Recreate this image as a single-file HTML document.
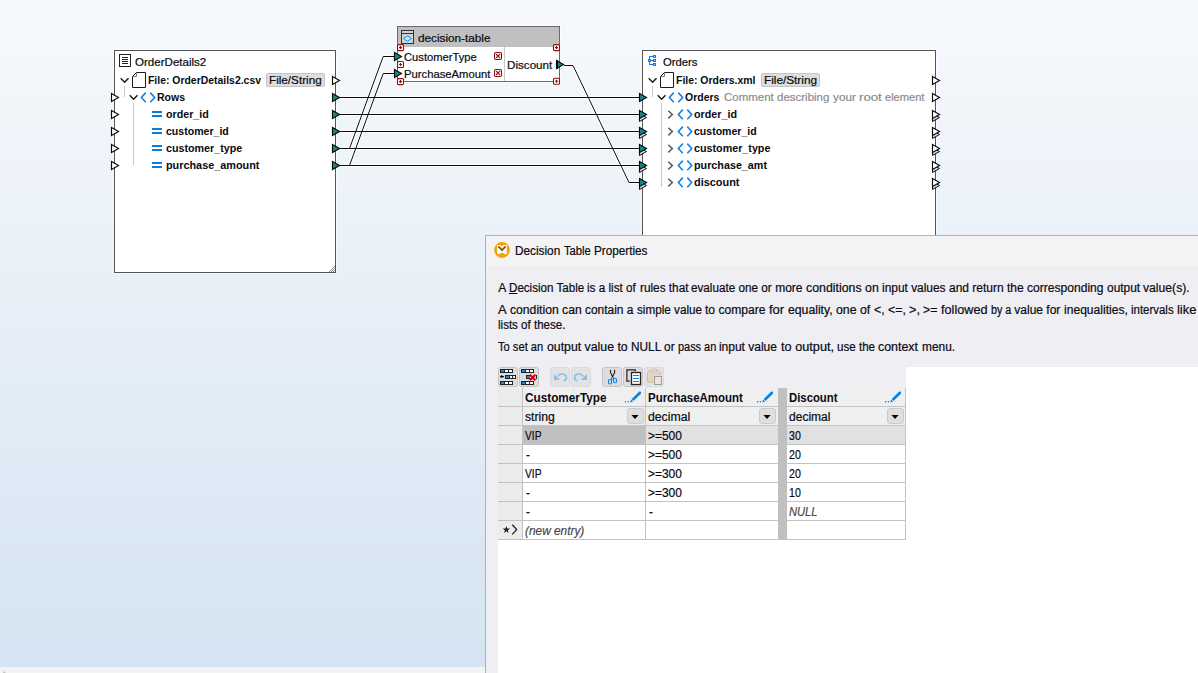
<!DOCTYPE html>
<html lang="en">
<head>
<meta charset="utf-8">
<title>Decision Table Properties</title>
<style>
*{box-sizing:border-box;margin:0;padding:0}
html,body{width:1198px;height:673px;overflow:hidden}
body{position:relative;font-family:"Liberation Sans",sans-serif;font-size:12px;color:#0a0a12;
 background:linear-gradient(#f7f9fc 0px,#d4e4f2 668px)}
.t{position:absolute;white-space:nowrap;line-height:17px;height:17px;transform-origin:0 0;-webkit-text-stroke:.2px #0a0a12}
.b{font-weight:bold;-webkit-text-stroke-width:0}
.m{font-size:11px}
.p{white-space:pre}
.g{color:#8c8c8c;-webkit-text-stroke-color:#8c8c8c}
.i{font-style:italic;color:#4a4a4a;-webkit-text-stroke-color:#4a4a4a}
.box{position:absolute;background:#fff;border:1px solid #545454;box-shadow:0 0 0 1px rgba(255,255,255,.55)}
.btn{position:absolute;background:#dedede;border:1px solid #c4c4c4;border-radius:2px}
svg{position:absolute;left:0;top:0;overflow:visible}
#dlg{position:absolute;left:485px;top:235px;width:713px;height:438px;background:#eeeef3;border-left:1px solid #a8b1bc;border-top:1px solid #b2b6bc}
#dlgtitle{position:absolute;left:486px;top:236px;width:712px;height:30px;background:#f3f3f3}
#white1{position:absolute;left:906px;top:367px;width:292px;height:306px;background:#fff}
#white2{position:absolute;left:498px;top:540px;width:700px;height:133px;background:#fff}
#hscroll{position:absolute;left:0;top:667px;width:485px;height:6px;background:#f4f4f4}
</style>
</head>
<body>
<div id="hscroll"></div>
<div class="box" style="left:114px;top:50px;width:222px;height:223px"></div>
<div class="box" style="left:642px;top:50px;width:294px;height:200px"></div>
<div class="box" style="left:397px;top:26px;width:163px;height:56px;border-color:#6a6a6a"></div>
<div style="position:absolute;left:398px;top:27px;width:161px;height:20px;background:#c0c0c0"></div>
<div class="btn" style="left:266px;top:73px;width:59px;height:14px"></div>
<div class="btn" style="left:761px;top:73px;width:59px;height:14px"></div>
<svg width="1198" height="673" viewBox="0 0 1198 673">
<polyline points="340,97.5 639,97.5" fill="none" stroke="#fff" stroke-width="3"/>
<polyline points="340,114.5 639,114.5" fill="none" stroke="#fff" stroke-width="3"/>
<polyline points="340,131.5 639,131.5" fill="none" stroke="#fff" stroke-width="3"/>
<polyline points="340,148.5 639,148.5" fill="none" stroke="#fff" stroke-width="3"/>
<polyline points="340,165.5 639,165.5" fill="none" stroke="#fff" stroke-width="3"/>
<polyline points="349.5,148.5 383.2,56.5 394,56.5" fill="none" stroke="#fff" stroke-width="3"/>
<polyline points="349.5,165.5 383.2,73.5 394,73.5" fill="none" stroke="#fff" stroke-width="3"/>
<polyline points="564,65.5 573,65.5 629,182.5 639,182.5" fill="none" stroke="#fff" stroke-width="3"/>
<polyline points="340,97.5 639,97.5" fill="none" stroke="#0a0a0a" stroke-width="1"/>
<polyline points="340,114.5 639,114.5" fill="none" stroke="#0a0a0a" stroke-width="1"/>
<polyline points="340,131.5 639,131.5" fill="none" stroke="#0a0a0a" stroke-width="1"/>
<polyline points="340,148.5 639,148.5" fill="none" stroke="#0a0a0a" stroke-width="1"/>
<polyline points="340,165.5 639,165.5" fill="none" stroke="#0a0a0a" stroke-width="1"/>
<polyline points="349.5,148.5 383.2,56.5 394,56.5" fill="none" stroke="#0a0a0a" stroke-width="1"/>
<polyline points="349.5,165.5 383.2,73.5 394,73.5" fill="none" stroke="#0a0a0a" stroke-width="1"/>
<polyline points="564,65.5 573,65.5 629,182.5 639,182.5" fill="none" stroke="#0a0a0a" stroke-width="1"/>
<g>
<rect x="119.5" y="54.5" width="11" height="12" fill="#fff" stroke="#222" stroke-width="1"/>
<rect x="122" y="57" width="6" height="1" fill="#222"/>
<rect x="122" y="59" width="6" height="1" fill="#222"/>
<rect x="122" y="61" width="6" height="1" fill="#222"/>
<rect x="122" y="63" width="6" height="1" fill="#222"/>
<polyline points="120.7,78.3 124.6,82.2 128.5,78.3" fill="none" stroke="#1a1a1a" stroke-width="1.5"/>
<path d="M136.5,72.5 H145.5 V87.5 H132.5 V76.5 Z" fill="#fff" stroke="#1a1a1a" stroke-width="1"/><path d="M136.5,73 V76.5 H133" fill="none" stroke="#6a6a6a" stroke-width="0.9"/>
<rect x="124" y="86" width="1" height="11" fill="#c8c8c8"/>
<rect x="133" y="103" width="1" height="62" fill="#c8c8c8"/>
<polyline points="129.7,95.3 133.6,99.2 137.5,95.3" fill="none" stroke="#1a1a1a" stroke-width="1.5"/>
<polyline points="145.8,92.6 141.4,97.45 145.8,102.3" fill="none" stroke="#1082e4" stroke-width="1.6"/><polyline points="150.3,92.6 154.7,97.45 150.3,102.3" fill="none" stroke="#1082e4" stroke-width="1.6"/>
<rect x="152" y="111" width="10" height="2" fill="#0a7cde"/><rect x="152" y="115" width="10" height="2" fill="#0a7cde"/>
<rect x="152" y="128" width="10" height="2" fill="#0a7cde"/><rect x="152" y="132" width="10" height="2" fill="#0a7cde"/>
<rect x="152" y="145" width="10" height="2" fill="#0a7cde"/><rect x="152" y="149" width="10" height="2" fill="#0a7cde"/>
<rect x="152" y="162" width="10" height="2" fill="#0a7cde"/><rect x="152" y="166" width="10" height="2" fill="#0a7cde"/>
<polygon points="111.5,93.5 118.5,97.5 111.5,101.5" fill="#fff" stroke="#0b0b0b" stroke-width="1.15" stroke-linejoin="miter"/>
<polygon points="111.5,110.5 118.5,114.5 111.5,118.5" fill="#fff" stroke="#0b0b0b" stroke-width="1.15" stroke-linejoin="miter"/>
<polygon points="111.5,127.5 118.5,131.5 111.5,135.5" fill="#fff" stroke="#0b0b0b" stroke-width="1.15" stroke-linejoin="miter"/>
<polygon points="111.5,144.5 118.5,148.5 111.5,152.5" fill="#fff" stroke="#0b0b0b" stroke-width="1.15" stroke-linejoin="miter"/>
<polygon points="111.5,161.5 118.5,165.5 111.5,169.5" fill="#fff" stroke="#0b0b0b" stroke-width="1.15" stroke-linejoin="miter"/>
<polygon points="332.5,76.5 339.5,80.5 332.5,84.5" fill="#fff" stroke="#0b0b0b" stroke-width="1.15" stroke-linejoin="miter"/>
<polygon points="332.5,93.5 339.5,97.5 332.5,101.5" fill="#0e8b8b" stroke="#0b0b0b" stroke-width="1.15" stroke-linejoin="miter"/>
<polygon points="332.5,110.5 339.5,114.5 332.5,118.5" fill="#0e8b8b" stroke="#0b0b0b" stroke-width="1.15" stroke-linejoin="miter"/>
<polygon points="332.5,127.5 339.5,131.5 332.5,135.5" fill="#0e8b8b" stroke="#0b0b0b" stroke-width="1.15" stroke-linejoin="miter"/>
<polygon points="332.5,144.5 339.5,148.5 332.5,152.5" fill="#0e8b8b" stroke="#0b0b0b" stroke-width="1.15" stroke-linejoin="miter"/>
<polygon points="332.5,161.5 339.5,165.5 332.5,169.5" fill="#0e8b8b" stroke="#0b0b0b" stroke-width="1.15" stroke-linejoin="miter"/>
<path d="M329,272 L335,266 M331,272 L335,268 M333,272 L335,270" stroke="#8c8c8c" stroke-width="1" fill="none"/>
<polygon points="5,670.6 2.6,673 5.6,673" fill="#c2c2ca"/>
</g>
<g>
<rect x="401.5" y="30.5" width="12" height="13" fill="#d2d2d2" stroke="#333" stroke-width="1"/>
<rect x="401" y="33" width="13" height="1" fill="#333"/>
<polygon points="403.5,38.5 407.5,35.8 411.5,38.5 407.5,41.2" fill="#c8e8fa" stroke="#1890f0" stroke-width="1"/>
<rect x="504" y="47" width="1" height="34" fill="#c8c8c8"/>
<rect x="494.5" y="52.5" width="7" height="7" rx="1.2" fill="#fff" stroke="#8b1212" stroke-width="1.1"/><path d="M496,54 L500,58 M500,54 L496,58" stroke="#8b1a1a" stroke-width="1.1" fill="none"/>
<rect x="494.5" y="69.5" width="7" height="7" rx="1.2" fill="#fff" stroke="#8b1212" stroke-width="1.1"/><path d="M496,71 L500,75 M500,71 L496,75" stroke="#8b1a1a" stroke-width="1.1" fill="none"/>
<rect x="397.5" y="44.6" width="6" height="6" rx="1" fill="#fff" stroke="#8b1212" stroke-width="1.1"/><path d="M399.0,47.6 H402.0 M400.5,46.1 V49.1" stroke="#8b1212" stroke-width="1.1" fill="none"/>
<rect x="397.5" y="61.5" width="6" height="6" rx="1" fill="#fff" stroke="#8b1212" stroke-width="1.1"/><path d="M399.0,64.5 H402.0 M400.5,63.0 V66.0" stroke="#8b1212" stroke-width="1.1" fill="none"/>
<rect x="397.5" y="78.6" width="6" height="6" rx="1" fill="#fff" stroke="#8b1212" stroke-width="1.1"/><path d="M399.0,81.6 H402.0 M400.5,80.1 V83.1" stroke="#8b1212" stroke-width="1.1" fill="none"/>
<rect x="553.5" y="44.6" width="6" height="6" rx="1" fill="#fff" stroke="#8b1212" stroke-width="1.1"/><path d="M555.0,47.6 H558.0 M556.5,46.1 V49.1" stroke="#8b1212" stroke-width="1.1" fill="none"/>
<rect x="553.5" y="78.3" width="6" height="6" rx="1" fill="#fff" stroke="#8b1212" stroke-width="1.1"/><path d="M555.0,81.3 H558.0 M556.5,79.8 V82.8" stroke="#8b1212" stroke-width="1.1" fill="none"/>
<polygon points="394.5,52.5 401.5,56.5 394.5,60.5" fill="#0e8b8b" stroke="#0b0b0b" stroke-width="1.15" stroke-linejoin="miter"/>
<polygon points="394.5,69.5 401.5,73.5 394.5,77.5" fill="#0e8b8b" stroke="#0b0b0b" stroke-width="1.15" stroke-linejoin="miter"/>
<polygon points="556.5,60.5 563.5,64.5 556.5,68.5" fill="#0e8b8b" stroke="#0b0b0b" stroke-width="1.15" stroke-linejoin="miter"/>
<rect x="556" y="60" width="2" height="9" fill="#0b0b0b"/>
</g>
<g>
<g fill="#0c7fe2"><rect x="649" y="56" width="1" height="9"/><rect x="649" y="56" width="4" height="1"/><rect x="649" y="60" width="4" height="1"/><rect x="649" y="64" width="4" height="1"/><rect x="648" y="59" width="3" height="3"/><rect x="653" y="55" width="3" height="3"/><rect x="653" y="59" width="3" height="3"/><rect x="653" y="63" width="3" height="3"/></g><g fill="#a9d0f4"><rect x="649" y="60" width="1" height="1"/><rect x="654" y="56" width="1" height="1"/><rect x="654" y="60" width="1" height="1"/><rect x="654" y="64" width="1" height="1"/></g>
<polyline points="648.7,78.3 652.6,82.2 656.5,78.3" fill="none" stroke="#1a1a1a" stroke-width="1.5"/>
<path d="M664.5,72.5 H673.5 V87.5 H660.5 V76.5 Z" fill="#fff" stroke="#1a1a1a" stroke-width="1"/><path d="M664.5,73 V76.5 H661" fill="none" stroke="#6a6a6a" stroke-width="0.9"/>
<rect x="652" y="86" width="1" height="11" fill="#c8c8c8"/>
<rect x="661" y="103" width="1" height="84" fill="#c8c8c8"/>
<polyline points="657.7,95.3 661.6,99.2 665.5,95.3" fill="none" stroke="#1a1a1a" stroke-width="1.5"/>
<polyline points="673.8,92.6 669.4,97.45 673.8,102.3" fill="none" stroke="#1082e4" stroke-width="1.6"/><polyline points="678.3,92.6 682.7,97.45 678.3,102.3" fill="none" stroke="#1082e4" stroke-width="1.6"/>
<polyline points="668.3,110.8 672.4,114.6 668.3,118.4" fill="none" stroke="#5a5a5a" stroke-width="1.45"/>
<polyline points="682.8,109.6 678.4,114.45 682.8,119.3" fill="none" stroke="#1082e4" stroke-width="1.6"/><polyline points="687.3,109.6 691.7,114.45 687.3,119.3" fill="none" stroke="#1082e4" stroke-width="1.6"/>
<polyline points="668.3,127.8 672.4,131.6 668.3,135.4" fill="none" stroke="#5a5a5a" stroke-width="1.45"/>
<polyline points="682.8,126.6 678.4,131.45 682.8,136.3" fill="none" stroke="#1082e4" stroke-width="1.6"/><polyline points="687.3,126.6 691.7,131.45 687.3,136.3" fill="none" stroke="#1082e4" stroke-width="1.6"/>
<polyline points="668.3,144.8 672.4,148.6 668.3,152.4" fill="none" stroke="#5a5a5a" stroke-width="1.45"/>
<polyline points="682.8,143.6 678.4,148.45 682.8,153.3" fill="none" stroke="#1082e4" stroke-width="1.6"/><polyline points="687.3,143.6 691.7,148.45 687.3,153.3" fill="none" stroke="#1082e4" stroke-width="1.6"/>
<polyline points="668.3,161.8 672.4,165.6 668.3,169.4" fill="none" stroke="#5a5a5a" stroke-width="1.45"/>
<polyline points="682.8,160.6 678.4,165.45 682.8,170.3" fill="none" stroke="#1082e4" stroke-width="1.6"/><polyline points="687.3,160.6 691.7,165.45 687.3,170.3" fill="none" stroke="#1082e4" stroke-width="1.6"/>
<polyline points="668.3,178.8 672.4,182.6 668.3,186.4" fill="none" stroke="#5a5a5a" stroke-width="1.45"/>
<polyline points="682.8,177.6 678.4,182.45 682.8,187.3" fill="none" stroke="#1082e4" stroke-width="1.6"/><polyline points="687.3,177.6 691.7,182.45 687.3,187.3" fill="none" stroke="#1082e4" stroke-width="1.6"/>
<polygon points="639.5,93.5 646.5,97.5 639.5,101.5" fill="#0e8b8b" stroke="#0b0b0b" stroke-width="1.15" stroke-linejoin="miter"/>
<polygon points="639.5,113.5 646.5,117.5 639.5,121.5" fill="#d6d6d6" stroke="#0b0b0b" stroke-width="1"/><polygon points="639.5,110.5 646.5,114.5 639.5,118.5" fill="#0e8b8b" stroke="#0b0b0b" stroke-width="1.15" stroke-linejoin="miter"/>
<polygon points="639.5,130.5 646.5,134.5 639.5,138.5" fill="#d6d6d6" stroke="#0b0b0b" stroke-width="1"/><polygon points="639.5,127.5 646.5,131.5 639.5,135.5" fill="#0e8b8b" stroke="#0b0b0b" stroke-width="1.15" stroke-linejoin="miter"/>
<polygon points="639.5,147.5 646.5,151.5 639.5,155.5" fill="#d6d6d6" stroke="#0b0b0b" stroke-width="1"/><polygon points="639.5,144.5 646.5,148.5 639.5,152.5" fill="#0e8b8b" stroke="#0b0b0b" stroke-width="1.15" stroke-linejoin="miter"/>
<polygon points="639.5,164.5 646.5,168.5 639.5,172.5" fill="#d6d6d6" stroke="#0b0b0b" stroke-width="1"/><polygon points="639.5,161.5 646.5,165.5 639.5,169.5" fill="#0e8b8b" stroke="#0b0b0b" stroke-width="1.15" stroke-linejoin="miter"/>
<polygon points="639.5,181.5 646.5,185.5 639.5,189.5" fill="#d6d6d6" stroke="#0b0b0b" stroke-width="1"/><polygon points="639.5,178.5 646.5,182.5 639.5,186.5" fill="#0e8b8b" stroke="#0b0b0b" stroke-width="1.15" stroke-linejoin="miter"/>
<polygon points="932.5,76.5 939.5,80.5 932.5,84.5" fill="#fff" stroke="#0b0b0b" stroke-width="1.15" stroke-linejoin="miter"/>
<polygon points="932.5,93.5 939.5,97.5 932.5,101.5" fill="#fff" stroke="#0b0b0b" stroke-width="1.15" stroke-linejoin="miter"/>
<polygon points="932.5,113.5 939.5,117.5 932.5,121.5" fill="#d6d6d6" stroke="#0b0b0b" stroke-width="1"/><polygon points="932.5,110.5 939.5,114.5 932.5,118.5" fill="#fff" stroke="#0b0b0b" stroke-width="1.15" stroke-linejoin="miter"/>
<polygon points="932.5,130.5 939.5,134.5 932.5,138.5" fill="#d6d6d6" stroke="#0b0b0b" stroke-width="1"/><polygon points="932.5,127.5 939.5,131.5 932.5,135.5" fill="#fff" stroke="#0b0b0b" stroke-width="1.15" stroke-linejoin="miter"/>
<polygon points="932.5,147.5 939.5,151.5 932.5,155.5" fill="#d6d6d6" stroke="#0b0b0b" stroke-width="1"/><polygon points="932.5,144.5 939.5,148.5 932.5,152.5" fill="#fff" stroke="#0b0b0b" stroke-width="1.15" stroke-linejoin="miter"/>
<polygon points="932.5,164.5 939.5,168.5 932.5,172.5" fill="#d6d6d6" stroke="#0b0b0b" stroke-width="1"/><polygon points="932.5,161.5 939.5,165.5 932.5,169.5" fill="#fff" stroke="#0b0b0b" stroke-width="1.15" stroke-linejoin="miter"/>
<polygon points="932.5,181.5 939.5,185.5 932.5,189.5" fill="#d6d6d6" stroke="#0b0b0b" stroke-width="1"/><polygon points="932.5,178.5 939.5,182.5 932.5,186.5" fill="#fff" stroke="#0b0b0b" stroke-width="1.15" stroke-linejoin="miter"/>
</g>
</svg>
<div id="dlg"></div>
<div id="dlgtitle"></div>
<div id="white1"></div>
<div id="white2"></div>
<svg width="1198" height="673" viewBox="0 0 1198 673">
<rect x="498" y="388" width="408" height="152" fill="#fff"/>
<rect x="498" y="388" width="408" height="37" fill="#efefef"/>
<rect x="498" y="388" width="24" height="152" fill="#ececec"/>
<rect x="523" y="426" width="122" height="18" fill="#c0c0c0"/>
<rect x="646" y="426" width="132" height="18" fill="#e1e1e1"/>
<rect x="787" y="426" width="118" height="18" fill="#e1e1e1"/>
<rect x="498" y="406" width="408" height="1" fill="#c3c3c3"/>
<rect x="498" y="425" width="408" height="1" fill="#c3c3c3"/>
<rect x="498" y="444" width="408" height="1" fill="#c3c3c3"/>
<rect x="498" y="463" width="408" height="1" fill="#c3c3c3"/>
<rect x="498" y="482" width="408" height="1" fill="#c3c3c3"/>
<rect x="498" y="501" width="408" height="1" fill="#c3c3c3"/>
<rect x="498" y="520" width="408" height="1" fill="#c3c3c3"/>
<rect x="498" y="539" width="408" height="1" fill="#c3c3c3"/>
<rect x="522" y="388" width="1" height="152" fill="#c3c3c3"/>
<rect x="645" y="388" width="1" height="152" fill="#c3c3c3"/>
<rect x="905" y="388" width="1" height="152" fill="#c3c3c3"/>
<rect x="778" y="388" width="9" height="152" fill="#c0c0c0"/>
<rect x="498.5" y="367.5" width="19" height="19" rx="2" fill="#dddddd" stroke="#c3c3c3"/>
<rect x="519.5" y="367.5" width="19" height="19" rx="2" fill="#dddddd" stroke="#c3c3c3"/>
<rect x="550.5" y="367.5" width="19" height="19" rx="2" fill="#e3e3e3" stroke="#dadada"/>
<rect x="571.5" y="367.5" width="19" height="19" rx="2" fill="#e3e3e3" stroke="#dadada"/>
<rect x="602.5" y="367.5" width="19" height="19" rx="2" fill="#dddddd" stroke="#c3c3c3"/>
<rect x="623.5" y="367.5" width="19" height="19" rx="2" fill="#dddddd" stroke="#c3c3c3"/>
<rect x="644.5" y="367.5" width="19" height="19" rx="2" fill="#e3e3e3" stroke="#dadada"/>
<rect x="500" y="369" width="13" height="4" fill="#222"/><rect x="501" y="370" width="3" height="2" fill="#0a8cf0"/><rect x="505" y="370" width="3" height="2" fill="#fff"/><rect x="509" y="370" width="3" height="2" fill="#fff"/>
<rect x="505" y="375" width="11" height="4" fill="#222"/><rect x="506" y="376" width="3" height="2" fill="#0a8cf0"/><rect x="510" y="376" width="2" height="2" fill="#fff"/><rect x="513" y="376" width="2" height="2" fill="#fff"/>
<rect x="500" y="381" width="13" height="4" fill="#222"/><rect x="501" y="382" width="3" height="2" fill="#0a8cf0"/><rect x="505" y="382" width="3" height="2" fill="#fff"/><rect x="509" y="382" width="3" height="2" fill="#fff"/>
<rect x="500" y="376" width="4" height="1.2" fill="#111"/><rect x="501.2" y="375" width="1.1" height="3" fill="#111"/>
<rect x="521" y="369" width="13" height="4" fill="#222"/><rect x="522" y="370" width="3" height="2" fill="#0a8cf0"/><rect x="526" y="370" width="3" height="2" fill="#fff"/><rect x="530" y="370" width="3" height="2" fill="#fff"/>
<rect x="526" y="375" width="11" height="4" fill="#222"/><rect x="527" y="376" width="3" height="2" fill="#0a8cf0"/><rect x="531" y="376" width="2" height="2" fill="#fff"/><rect x="534" y="376" width="2" height="2" fill="#fff"/>
<rect x="521" y="381" width="13" height="4" fill="#222"/><rect x="522" y="382" width="3" height="2" fill="#0a8cf0"/><rect x="526" y="382" width="3" height="2" fill="#fff"/><rect x="530" y="382" width="3" height="2" fill="#fff"/>
<rect x="530" y="374" width="6" height="6" fill="#dcdcdc"/>
<path d="M529.8,374.6 L535.4,380.3 M535.4,374.6 L529.8,380.3" stroke="#d20000" stroke-width="2" fill="none"/>
<path d="M558,376.6 C559,373.2 565.8,372.8 566.3,377.2 C566.5,379.4 565.2,380.4 563.6,380.7" fill="none" stroke="#88bfea" stroke-width="1.6"/><polygon points="554,374 554,380 560,380" fill="#88bfea"/>
<path d="M583,376.6 C582,373.2 575.2,372.8 574.7,377.2 C574.5,379.4 575.8,380.4 577.4,380.7" fill="none" stroke="#88bfea" stroke-width="1.6"/><polygon points="587,374 587,380 581,380" fill="#88bfea"/>
<path d="M610.5,369.8 V372.6 L613,377.6 M614.6,369.8 V372.6 L612.1,377.6" stroke="#222" stroke-width="1.1" fill="none"/>
<rect x="608.5" y="379.5" width="3" height="4.5" rx="1.4" fill="none" stroke="#0a84e8" stroke-width="1.1"/><path d="M611.6,377.3 V381" stroke="#0a84e8" stroke-width="1.1" fill="none"/>
<rect x="613.5" y="378.3" width="3" height="4.5" rx="1.4" fill="none" stroke="#0a84e8" stroke-width="1.1"/><path d="M613.4,377.3 V380" stroke="#0a84e8" stroke-width="1.1" fill="none"/>
<path d="M629.8,381.2 H626.9 V369.8 H635.3 V371.2" fill="none" stroke="#222" stroke-width="1.2"/>
<rect x="631.5" y="372.5" width="9" height="12" fill="#fff" stroke="#222" stroke-width="1.3"/>
<rect x="633" y="375" width="6" height="1" fill="#1082e4"/>
<rect x="633" y="378" width="6" height="1" fill="#1082e4"/>
<rect x="633" y="381" width="6" height="1" fill="#1082e4"/>
<path d="M647.5,382.3 V372.2 L649.3,370.5 H658.7 L660.5,372.2 V376 H653.6 V382.3 Z" fill="#e3d4c0" stroke="#d2bc9c" stroke-width="1"/>
<rect x="651.5" y="369" width="5" height="2.6" rx=".6" fill="#dcdcdc" stroke="#c2c2c2" stroke-width=".8"/>
<rect x="653.4" y="375.4" width="9.2" height="10.2" fill="#e8e8e8"/>
<rect x="654.5" y="376.5" width="7" height="8" fill="#e6e6e6" stroke="#9c9c9c" stroke-width="1"/>
<rect x="625" y="401" width="1.2" height="1.4" fill="#0a84e2"/><rect x="627.8" y="401" width="1.2" height="1.4" fill="#0a84e2"/><polygon points="630.1,402.5 631.2,399.6 633,401.4" fill="#0a84e2"/><path d="M632.6,400 L639.5,393.2" stroke="#0a84e2" stroke-width="2.7" stroke-linecap="butt" fill="none"/><circle cx="639.7" cy="393" r="1.45" fill="#0a84e2"/>
<rect x="757" y="401" width="1.2" height="1.4" fill="#0a84e2"/><rect x="759.8" y="401" width="1.2" height="1.4" fill="#0a84e2"/><polygon points="762.1,402.5 763.2,399.6 765,401.4" fill="#0a84e2"/><path d="M764.6,400 L771.5,393.2" stroke="#0a84e2" stroke-width="2.7" stroke-linecap="butt" fill="none"/><circle cx="771.7" cy="393" r="1.45" fill="#0a84e2"/>
<rect x="885" y="401" width="1.2" height="1.4" fill="#0a84e2"/><rect x="887.8" y="401" width="1.2" height="1.4" fill="#0a84e2"/><polygon points="890.1,402.5 891.2,399.6 893,401.4" fill="#0a84e2"/><path d="M892.6,400 L899.5,393.2" stroke="#0a84e2" stroke-width="2.7" stroke-linecap="butt" fill="none"/><circle cx="899.7" cy="393" r="1.45" fill="#0a84e2"/>
<rect x="627.5" y="408.5" width="16" height="15" rx="2.5" fill="#dedede" stroke="#cbcbcb"/><polygon points="631.4,415 638.6,415 635,419.1" fill="#050505"/>
<rect x="759.5" y="408.5" width="16" height="15" rx="2.5" fill="#dedede" stroke="#cbcbcb"/><polygon points="763.4,415 770.6,415 767,419.1" fill="#050505"/>
<rect x="887.5" y="408.5" width="16" height="15" rx="2.5" fill="#dedede" stroke="#cbcbcb"/><polygon points="891.4,415 898.6,415 895,419.1" fill="#050505"/>
<polygon points="506.35,525.90 507.26,528.55 510.06,528.59 507.82,530.28 508.64,532.96 506.35,531.35 504.06,532.96 504.88,530.28 502.64,528.59 505.44,528.55" fill="#222"/>
<polyline points="512.3,524.8 516.6,529.6 512.3,534.4" fill="none" stroke="#222" stroke-width="1.35"/>
<circle cx="502" cy="250" r="7.9" fill="#f5a20a"/>
<path d="M497.2,245 H500.6 L502,246.4 L503.4,245 H506.8 V254 H504.6 Q502,251.4 499.4,254 H497.2 Z" fill="#fff"/>
<path d="M498.4,246.4 L502,250.2 L505.6,246.4" fill="none" stroke="#8c5a00" stroke-width="1.9"/>
</svg>
<span class="t m" style="left:134.8px;top:54px;transform:scaleX(1.0507)">OrderDetails2</span>
<span class="t b m" style="left:148.2px;top:72px;transform:scaleX(0.9477)">File: OrderDetails2.csv</span>
<span class="t m" style="left:269.1px;top:72px;transform:scaleX(1.0640)">File/String</span>
<span class="t b m" style="left:157.1px;top:89px;transform:scaleX(0.9576)">Rows</span>
<span class="t b m" style="left:165.8px;top:106px;transform:scaleX(0.9724)">order_id</span>
<span class="t b m" style="left:165.8px;top:123px;transform:scaleX(0.9599)">customer_id</span>
<span class="t b m" style="left:165.8px;top:140px;transform:scaleX(0.9736)">customer_type</span>
<span class="t b m" style="left:165.8px;top:157px;transform:scaleX(0.9858)">purchase_amount</span>
<span class="t m" style="left:418.0px;top:30px;transform:scaleX(1.0681)">decision-table</span>
<span class="t m" style="left:404.1px;top:49px;transform:scaleX(1.0163)">CustomerType</span>
<span class="t m" style="left:404.1px;top:66px;transform:scaleX(1.0238)">PurchaseAmount</span>
<span class="t m" style="left:507.1px;top:57px;transform:scaleX(1.0585)">Discount</span>
<span class="t m" style="left:663.0px;top:54px;transform:scaleX(1.0260)">Orders</span>
<span class="t b m" style="left:676.1px;top:72px;transform:scaleX(0.9491)">File: Orders.xml</span>
<span class="t m" style="left:763.7px;top:72px;transform:scaleX(1.0700)">File/String</span>
<span class="t b m" style="left:684.7px;top:89px;transform:scaleX(0.9535)">Orders</span>
<span class="t b m" style="left:693.6px;top:106px;transform:scaleX(0.9769)">order_id</span>
<span class="t b m" style="left:693.6px;top:123px;transform:scaleX(0.9584)">customer_id</span>
<span class="t b m" style="left:693.6px;top:140px;transform:scaleX(0.9762)">customer_type</span>
<span class="t b m" style="left:693.6px;top:157px;transform:scaleX(0.9786)">purchase_amt</span>
<span class="t b m" style="left:693.6px;top:174px;transform:scaleX(0.9925)">discount</span>
<span class="t" style="left:498.3px;top:317px;transform:scaleX(0.9624)">lists of these.</span>
<span class="t b" style="left:524.6px;top:390px;transform:scaleX(0.9803)">CustomerType</span>
<span class="t b" style="left:647.7px;top:390px;transform:scaleX(0.9541)">PurchaseAmount</span>
<span class="t b" style="left:789.1px;top:390px;transform:scaleX(0.9446)">Discount</span>
<span class="t" style="left:524.7px;top:409px;transform:scaleX(1.0155)">string</span>
<span class="t" style="left:647.7px;top:409px;transform:scaleX(1.0203)">decimal</span>
<span class="t" style="left:789.1px;top:409px">decimal</span>
<span class="t" style="left:525.2px;top:428px;transform:scaleX(0.8530)">VIP</span>
<span class="t" style="left:648.2px;top:428px;transform:scaleX(0.9957)">&gt;=500</span>
<span class="t" style="left:789.1px;top:428px;transform:scaleX(0.8833)">30</span>
<span class="t" style="left:525.5px;top:447px;transform:scaleX(0.9750)">-</span>
<span class="t" style="left:648.2px;top:447px;transform:scaleX(0.9957)">&gt;=500</span>
<span class="t" style="left:789.1px;top:447px;transform:scaleX(0.8833)">20</span>
<span class="t" style="left:525.2px;top:466px;transform:scaleX(0.8530)">VIP</span>
<span class="t" style="left:648.2px;top:466px;transform:scaleX(0.9957)">&gt;=300</span>
<span class="t" style="left:789.1px;top:466px;transform:scaleX(0.8833)">20</span>
<span class="t" style="left:525.5px;top:485px;transform:scaleX(0.9750)">-</span>
<span class="t" style="left:648.2px;top:485px;transform:scaleX(0.9957)">&gt;=300</span>
<span class="t" style="left:789.1px;top:485px;transform:scaleX(0.8833)">10</span>
<span class="t" style="left:525.5px;top:504px;transform:scaleX(0.9750)">-</span>
<span class="t" style="left:648.5px;top:504px;transform:scaleX(0.9750)">-</span>
<span class="t i" style="left:789.1px;top:504px;transform:scaleX(0.9287)">NULL</span>
<span class="t i" style="left:525.2px;top:523px;transform:scaleX(0.9878)">(new entry)</span>
<span class="t p" style="left:515.1px;top:243px;transform:scaleX(0.9826)">Decision </span>
<span class="t p" style="left:563.6px;top:243px;transform:scaleX(0.9366)">Table </span>
<span class="t p" style="left:593.6px;top:243px;transform:scaleX(0.9780)">Properties</span>
<span class="t p g m" style="left:724.1px;top:89px;transform:scaleX(1.0424)">Comment </span>
<span class="t p g m" style="left:777.0px;top:89px;transform:scaleX(1.0451)">describing </span>
<span class="t p g m" style="left:832.6px;top:89px;transform:scaleX(1.0708)">your </span>
<span class="t p g m" style="left:858.8px;top:89px;transform:scaleX(1.1946)">root </span>
<span class="t p g m" style="left:885.1px;top:89px;transform:scaleX(1.0066)">element</span>
<span class="t p" style="left:498.3px;top:280px">A </span>
<span class="t p" style="left:509.0px;top:280px;transform:scaleX(0.9659)"><u>D</u>ecision Table </span>
<span class="t p" style="left:587.4px;top:280px;transform:scaleX(0.9764)">is a list of </span>
<span class="t p" style="left:639.5px;top:280px;transform:scaleX(0.9829)">rules that </span>
<span class="t p" style="left:691.3px;top:280px;transform:scaleX(0.9749)">evaluate one or </span>
<span class="t p" style="left:775.2px;top:280px">more </span>
<span class="t p" style="left:805.8px;top:280px;transform:scaleX(1.0302)">conditions on </span>
<span class="t p" style="left:882.1px;top:280px;transform:scaleX(0.9927)">input values </span>
<span class="t p" style="left:949.0px;top:280px">and return the </span>
<span class="t p" style="left:1026.8px;top:280px;transform:scaleX(1.0064)">corresponding </span>
<span class="t p" style="left:1106.7px;top:280px;transform:scaleX(0.9945)">output </span>
<span class="t p" style="left:1143.2px;top:280px;transform:scaleX(1.0149)">value(s).</span>
<span class="t p" style="left:498.3px;top:302px;transform:scaleX(1.0760)">A </span>
<span class="t p" style="left:509.8px;top:302px;transform:scaleX(1.0140)">condition can </span>
<span class="t p" style="left:584.9px;top:302px;transform:scaleX(0.9953)">contain a </span>
<span class="t p" style="left:636.7px;top:302px;transform:scaleX(0.9767)">simple value </span>
<span class="t p" style="left:705.1px;top:302px;transform:scaleX(1.0083)">to compare </span>
<span class="t p" style="left:769.0px;top:302px;transform:scaleX(1.0840)">for </span>
<span class="t p" style="left:787.8px;top:302px;transform:scaleX(1.0182)">equality, </span>
<span class="t p" style="left:835.8px;top:302px;transform:scaleX(1.0272)">one of </span>
<span class="t p" style="left:873.5px;top:302px;transform:scaleX(1.0228)">&lt;, </span>
<span class="t p" style="left:887.5px;top:302px;transform:scaleX(1.0296)">&lt;=, </span>
<span class="t p" style="left:908.8px;top:302px;transform:scaleX(1.0594)">&gt;, </span>
<span class="t p" style="left:923.3px;top:302px;transform:scaleX(1.0196)">&gt;= </span>
<span class="t p" style="left:941.0px;top:302px;transform:scaleX(1.0554)">followed </span>
<span class="t p" style="left:991.0px;top:302px;transform:scaleX(0.8956)">by a </span>
<span class="t p" style="left:1014.3px;top:302px">value for </span>
<span class="t p" style="left:1063.5px;top:302px;transform:scaleX(1.0072)">inequalities, </span>
<span class="t p" style="left:1130.7px;top:302px;transform:scaleX(0.9535)">intervals </span>
<span class="t p" style="left:1176.5px;top:302px;transform:scaleX(1.0768)">like</span>
<span class="t p" style="left:498.3px;top:339px;transform:scaleX(0.9283)">To set an </span>
<span class="t p" style="left:546.6px;top:339px;transform:scaleX(1.0248)">output value to </span>
<span class="t p" style="left:630.7px;top:339px;transform:scaleX(0.9857)">NULL or </span>
<span class="t p" style="left:677.6px;top:339px;transform:scaleX(0.9102)">pass an </span>
<span class="t p" style="left:718.9px;top:339px">input value </span>
<span class="t p" style="left:780.5px;top:339px;transform:scaleX(1.0604)">to output, </span>
<span class="t p" style="left:837.1px;top:339px;transform:scaleX(0.9671)">use the </span>
<span class="t p" style="left:878.4px;top:339px;transform:scaleX(1.0326)">context </span>
<span class="t p" style="left:921.8px;top:339px;transform:scaleX(0.9922)">menu.</span>
</body>
</html>
